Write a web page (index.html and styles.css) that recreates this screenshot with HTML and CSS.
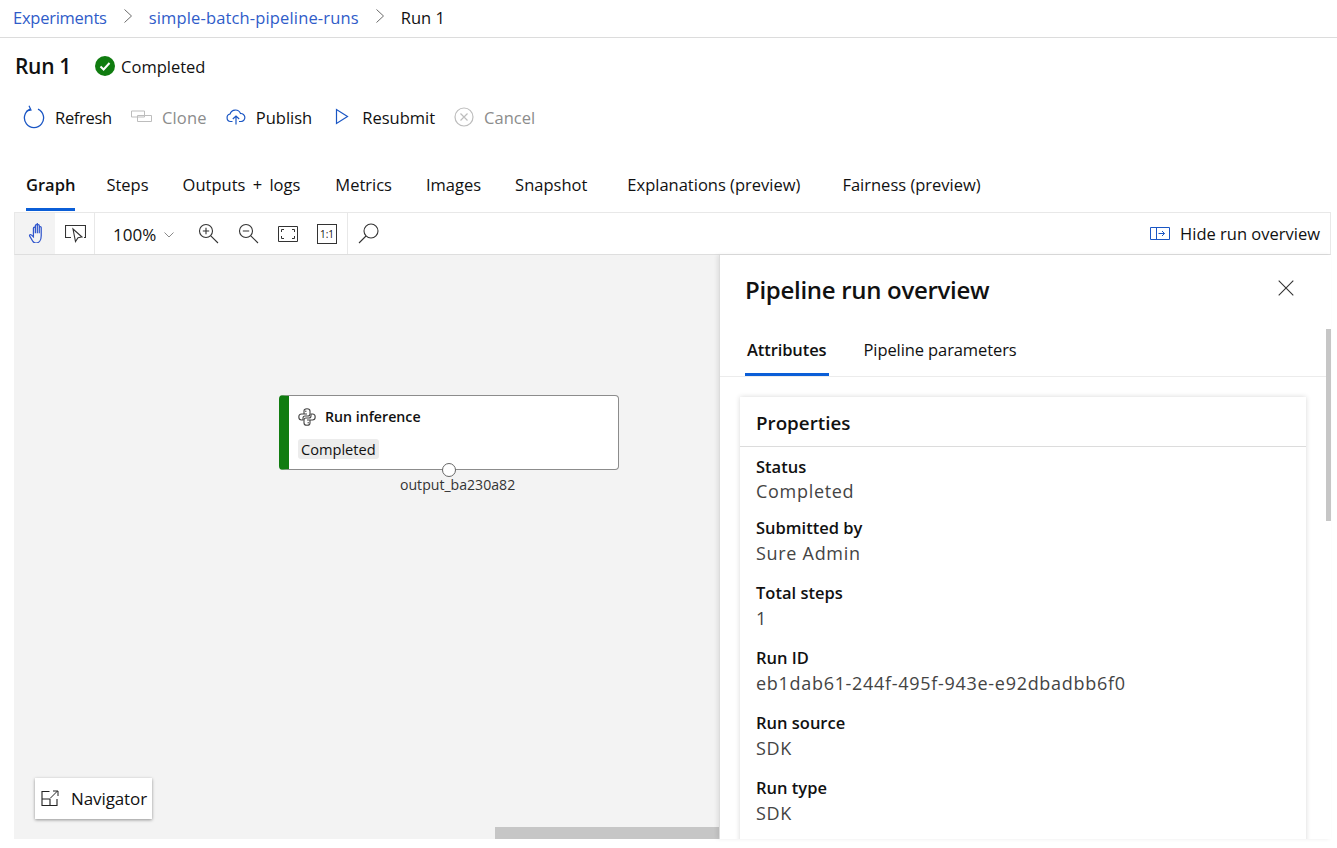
FILE: index.html
```html
<!DOCTYPE html>
<html lang="en">
<head>
  <meta charset="UTF-8" />
  <title>Run 1</title>
  <link rel="stylesheet" href="styles.css">
</head>
<body>
  <nav class="breadcrumb">
    <a class="crumb-first" href="#">Experiments</a>
    <svg class="crumb-sep" width="10" height="16" viewBox="0 0 10 16"><path d="M1.500 1.500 8.500 8l-7 6.500" fill="none" stroke="#6b6b6b" stroke-width="1"/></svg>
    <a class="crumb-second" href="#">simple-batch-pipeline-runs</a>
    <svg class="crumb-sep" width="10" height="16" viewBox="0 0 10 16"><path d="M1.500 1.500 8.500 8l-7 6.500" fill="none" stroke="#6b6b6b" stroke-width="1"/></svg>
    <span class="crumb-current">Run 1</span>
  </nav>

  <header class="run-header">
    <h1>Run 1</h1>
    <svg class="status-icon" width="20" height="20" viewBox="0 0 20 20"><circle cx="10" cy="10" r="10" fill="#107c10"/><path d="M5.500 10.500 8.600 13.500 14.500 7" fill="none" stroke="#fff" stroke-width="2"/></svg>
    <span class="status-text">Completed</span>
  </header>

  <div class="commands">
    <button class="cmd cmd-refresh">
      <svg width="22" height="24" viewBox="0 0 22 24"><path d="M7 4.200A9.600 9.600 0 1 0 15 4.200" fill="none" stroke="#1a56c4" stroke-width="1.300"/><path d="M6 .8 8 5 3.600 6" fill="none" stroke="#1a56c4" stroke-width="1.200"/></svg>
      Refresh
    </button>
    <button class="cmd cmd-clone is-disabled">
      <svg width="21" height="14" viewBox="0 0 21 14"><path d="M.5 1h13v6H.5zM6.500 5.500h14v6h-14z" fill="none" stroke="#bdbdbd" stroke-width="1"/></svg>
      Clone
    </button>
    <button class="cmd">
      <svg width="20" height="16" viewBox="0 0 20 16"><path d="M6.500 12.500H4.500a3.800 3.800 0 0 1-.4-7.500A5.500 5.500 0 0 1 14.500 4.500a4 4 0 0 1 .7 8h-2.200" fill="none" stroke="#1a56c4" stroke-width="1.200"/><path d="M10 15.500V7M6.800 10 10 7l3.200 3" fill="none" stroke="#1a56c4" stroke-width="1.200"/></svg>
      Publish
    </button>
    <button class="cmd cmd-resubmit">
      <svg width="14" height="18" viewBox="0 0 14 18"><path d="M1.500 1.500v14l11-7z" fill="none" stroke="#1a56c4" stroke-width="1.200"/></svg>
      Resubmit
    </button>
    <button class="cmd is-disabled">
      <svg width="20" height="20" viewBox="0 0 20 20"><circle cx="10" cy="10" r="9" fill="none" stroke="#bdbdbd" stroke-width="1.200"/><path d="M6.500 6.500l7 7M13.500 6.500l-7 7" fill="none" stroke="#bdbdbd" stroke-width="1.200"/></svg>
      Cancel
    </button>
  </div>

  <div class="tabs">
    <a class="tab is-active" href="#">Graph</a>
    <a class="tab" href="#">Steps</a>
    <a class="tab tab-spaced" href="#">Outputs + logs</a>
    <a class="tab" href="#">Metrics</a>
    <a class="tab" href="#">Images</a>
    <a class="tab" href="#">Snapshot</a>
    <a class="tab tab-wide" href="#">Explanations (preview)</a>
    <a class="tab tab-fair" href="#">Fairness (preview)</a>
  </div>

  <section class="graph-box">
    <div class="toolbar">
      <div class="tool-group">
        <button class="tool is-on">
          <svg class="hand-icon" width="17" height="20" viewBox="0 0 15 19.500"><path d="M4 18 .9 12.800c-.6-1.200.8-2 1.600-1.200L4.500 13.500V5c0-1.300 1.900-1.300 1.900 0v5-7.500c0-1.300 1.900-1.300 1.900 0V10-1 2.500c0-1.300 1.900-1.300 1.900 0V10 4.500c0-1.300 1.900-1.300 1.900 0v8c0 4-2 7-5 7H7c-1.300 0-2.200-.3-3-1.500z" fill="none" stroke="#2f55cc" stroke-width="1.200"/></svg>
        </button>
        <button class="tool tool-select">
          <svg width="21" height="18" viewBox="0 0 21 18"><path d="M6 12.500H.5V.5h20v12h-1.500" fill="none" stroke="#333" stroke-width="1.100"/><path d="M8 4l9 8-4 .8-2.500 3.700z" fill="none" stroke="#333" stroke-width="1.100"/></svg>
        </button>
      </div>
      <div class="tool-group tool-group-zoom">
        <button class="zoom-select">100%
          <svg width="10" height="6" viewBox="0 0 10 6"><path d="M.5.5 5 5 9.500.5" fill="none" stroke="#8a8a8a"/></svg>
        </button>
        <button class="tool-plain">
          <svg width="21" height="21" viewBox="0 0 21 21"><circle cx="8" cy="8" r="6.500" fill="none" stroke="#333" stroke-width="1.100"/><path d="M12.800 12.800 20 20M4.800 8h6.400M8 4.800v6.400" fill="none" stroke="#333" stroke-width="1.100"/></svg>
        </button>
        <button class="tool-plain">
          <svg width="21" height="21" viewBox="0 0 21 21"><circle cx="8" cy="8" r="6.500" fill="none" stroke="#333" stroke-width="1.100"/><path d="M12.800 12.800 20 20M4.800 8h6.400" fill="none" stroke="#333" stroke-width="1.100"/></svg>
        </button>
        <button class="tool-plain">
          <svg width="20" height="16" viewBox="0 0 20 16"><path d="M.5.500h19v15H.5z" fill="none" stroke="#333"/><path d="M3.500 6V3.500H6M14 3.500h2.500V6M16.500 10v2.500H14M6 12.500H3.500V10" fill="none" stroke="#333"/></svg>
        </button>
        <button class="tool-plain ratio-btn">1:1</button>
      </div>
      <button class="tool-plain tool-search">
        <svg width="21" height="21" viewBox="0 0 21 21"><circle cx="13" cy="8" r="7" fill="none" stroke="#333" stroke-width="1.100"/><path d="M8 13 1 20" fill="none" stroke="#333" stroke-width="1.100"/></svg>
      </button>
      <button class="hide-overview">
        <svg width="20" height="13" viewBox="0 0 20 13"><path d="M.5.500h19v12H.5zM6.500.500v12" fill="none" stroke="#1a56c4"/><path d="M8.500 6.500h6M12 4l2.500 2.500L12 9" fill="none" stroke="#1a56c4"/></svg>
        Hide run overview
      </button>
    </div>

    <div class="workspace">
      <div class="canvas">
        <div class="node">
          <div class="node-title">
            <svg width="18" height="18" viewBox="0 0 18 18">
              <g fill="none" stroke="#444" stroke-width="1.100">
                <path d="M6 6V3c0-1.500 1.500-2.300 3-2.300s3 .8 3 2.300v3c0 1.200-.9 2-2 2H7c-1.200 0-2 .8-2 2v2H3.500C1.800 12 .8 10.800.8 9s1-3 2.700-3H9"/>
                <path transform="rotate(180 9 9)" d="M6 6V3c0-1.500 1.500-2.300 3-2.300s3 .8 3 2.300v3c0 1.200-.9 2-2 2H7c-1.200 0-2 .8-2 2v2H3.500C1.800 12 .8 10.800.8 9s1-3 2.700-3H9"/>
              </g>
              <circle cx="7.800" cy="3.200" r=".7" fill="#444"/><circle cx="10.200" cy="14.800" r=".7" fill="#444"/>
            </svg>
            <span>Run inference</span>
          </div>
          <span class="node-badge">Completed</span>
          <span class="node-port"></span>
          <span class="node-output">output_ba230a82</span>
        </div>
        <button class="navigator">
          <svg width="18" height="17" viewBox="0 0 18 17"><path d="M8.500 1.500H1v14h15V9M1 9h8v6.500" fill="none" stroke="#222" stroke-width="1.100"/><path d="M9.500 8 16.500 1M12 1h5v5" fill="none" stroke="#222" stroke-width="1"/></svg>
          Navigator
        </button>
        <div class="h-thumb"></div>
      </div>

      <aside class="panel">
        <div class="panel-head">
          <h2>Pipeline run overview</h2>
          <svg class="panel-close" width="16" height="16" viewBox="0 0 16 16"><path d="M.7.700l14.600 14.600M15.300.700.700 15.300" fill="none" stroke="#333" stroke-width="1.100"/></svg>
        </div>
        <div class="panel-tabs">
          <a class="panel-tab is-active" href="#">Attributes</a>
          <a class="panel-tab" href="#">Pipeline parameters</a>
        </div>
        <div class="panel-body">
          <div class="card">
            <h3>Properties</h3>
            <dl class="props">
              <dt>Status</dt><dd>Completed</dd>
              <dt>Submitted by</dt><dd>Sure Admin</dd>
              <dt>Total steps</dt><dd>1</dd>
              <dt>Run ID</dt><dd>eb1dab61-244f-495f-943e-e92dbadbb6f0</dd>
              <dt>Run source</dt><dd>SDK</dd>
              <dt>Run type</dt><dd>SDK</dd>
            </dl>
          </div>
        </div>
        <div class="v-thumb"></div>
      </aside>
    </div>
  </section>
</body>
</html>
```

FILE: styles.css
```css
* {
  margin: 0; padding: 0; box-sizing: border-box;
  font-family: 'Open Sans', 'Noto Sans', sans-serif;
}

html, body {
  height: 848px;
  overflow: hidden;
}

body {
  background: #fff;
  color: #111;
  font-size: 16.5px;
}

a {
  text-decoration: none;
  color: inherit;
}

button {
  background: none;
  border: none;
  color: inherit;
  font-size: inherit;
  letter-spacing: inherit;
}

.breadcrumb {
  height: 38px;
  padding: 0 13px 2px;
  display: flex;
  align-items: center;
  border-bottom: 1px solid #dcdcdc;
}

.breadcrumb a {
  color: #2f5cc9;
}

.crumb-first {
  letter-spacing: -0.25px;
}

.crumb-second {
  letter-spacing: 0.15px;
}

.crumb-sep {
  margin: -4px 16px 0 16px;
}

.run-header {
  height: 56px;
  padding: 0 15px;
  display: flex;
  align-items: center;
}

.run-header h1 {
  font-size: 21px;
  font-weight: 600;
  letter-spacing: -0.3px;
  margin-right: 24px;
}

.status-icon {
  margin-right: 6px;
}

.commands {
  height: 48px;
  padding: 0 23px 2px;
  display: flex;
  align-items: center;
  gap: 19px;
}

.cmd {
  display: flex;
  align-items: center;
  gap: 10px;
}

.cmd-refresh {
  letter-spacing: -0.3px;
}

.cmd-clone {
  letter-spacing: 0.2px;
}

.cmd-resubmit {
  margin-left: 4px;
  gap: 13px;
}

.is-disabled {
  color: #8c8c8c;
}

.tabs {
  margin-top: 25px;
  margin-bottom: 1px;
  height: 44px;
  padding: 0 26px;
  display: flex;
  gap: 34px;
}

.tab {
  position: relative;
  padding-top: 6px;
}

.tab.is-active {
  font-weight: 600;
  margin-right: -3px;
}

.tab-spaced {
  word-spacing: 3px;
  margin-right: 1px;
}

.tab-wide {
  margin-left: 6px;
}

.tab-fair {
  margin-left: 8px;
}

.tab.is-active::after,
.panel-tab.is-active::after {
  content: "";
  position: absolute;
  left: 0;
  right: 0;
  bottom: 0;
  height: 3px;
  background: #0b5ed7;
}

.graph-box {
  margin: 0 6px 0 14px;
}

.toolbar {
  height: 43px;
  display: flex;
  align-items: center;
  border: 1px solid #e8e8e8;
  border-bottom-color: #dedede;
}

.tool-group {
  height: 100%;
  display: flex;
  align-items: center;
  border-right: 1px solid #e8e8e8;
}

.tool {
  width: 40px;
  height: 100%;
  display: flex;
  align-items: center;
  justify-content: center;
}

.hand-icon {
  margin: 0 0 2px 3px;
}

.tool-select {
  width: 39px;
  padding: 1px 0 0 2px;
}

.tool.is-on {
  background: #f3f3f3;
}

.tool-group-zoom {
  padding: 0 10px 0 18px;
  gap: 19px;
}

.zoom-select {
  width: 66px;
  display: flex;
  align-items: center;
  justify-content: space-between;
  padding-right: 5px;
  font-size: 17px;
  margin-top: 2px;
}

.tool-plain {
  display: flex;
  align-items: center;
  justify-content: center;
}

.ratio-btn {
  width: 20px;
  height: 20px;
  border: 1px solid #333;
  font-size: 10px;
}

.tool-search {
  margin-left: 10px;
}

.hide-overview {
  margin-left: auto;
  margin-right: 10px;
  display: flex;
  align-items: center;
  gap: 10px;
}

.workspace {
  height: 584px;
  display: flex;
}

.canvas {
  flex: 1;
  position: relative;
  background: #f3f3f3;
  overflow: hidden;
}

.node {
  position: absolute;
  left: 265px;
  top: 140px;
  width: 340px;
  height: 75px;
  background: #fff;
  border: 1px solid #8c8c8c;
  border-left: 10px solid #107c10;
  border-radius: 4px;
  padding: 11px 0 0 9px;
}

.node-title {
  display: flex;
  align-items: center;
  gap: 9px;
  font-size: 14.2px;
  font-weight: 600;
}

.node-badge {
  display: inline-block;
  margin-top: 13px;
  padding: 0 3px;
  background: #ececec;
  border-radius: 3px;
  font-size: 14.6px;
  line-height: 20px;
}

.node-port {
  position: absolute;
  left: 153px;
  bottom: -8px;
  width: 14px;
  height: 14px;
  background: #fff;
  border: 1px solid #666;
  border-radius: 50%;
}

.node-output {
  position: absolute;
  left: 111px;
  bottom: -25px;
  font-size: 14.1px;
  color: #333;
  white-space: nowrap;
}

.navigator {
  position: absolute;
  left: 21px;
  bottom: 20px;
  width: 117px;
  height: 41px;
  background: #fff;
  box-shadow: 0 1px 3px rgba(0, 0, 0, 0.4);
  display: flex;
  align-items: center;
  padding-left: 6px;
  gap: 12px;
  font-size: 17px;
  letter-spacing: -0.1px;
}

.h-thumb {
  position: absolute;
  right: 0;
  bottom: 0;
  width: 224px;
  height: 12px;
  background: #c6c6c6;
}

.panel {
  width: 612px;
  position: relative;
  background: #fff;
  border-left: 1px solid #dcdcdc;
  box-shadow: -2px 0 4px rgba(0, 0, 0, 0.08);
  overflow: hidden;
}

.panel-head {
  height: 71px;
  padding: 0 37px 0 25px;
  display: flex;
  align-items: center;
  justify-content: space-between;
}

.panel-head h2 {
  font-size: 24px;
  font-weight: 600;
  letter-spacing: -0.3px;
  margin-bottom: 2px;
}

.panel-close {
  margin-bottom: 5px;
}

.panel-tabs {
  height: 51px;
  padding: 0 25px;
  display: flex;
  gap: 33px;
  border-bottom: 1px solid #ececec;
  letter-spacing: -0.1px;
}

.panel-tab {
  position: relative;
  padding: 12px 2px 0;
}

.panel-tab.is-active {
  font-weight: 600;
}

.panel-body {
  padding: 20px 25px 0 20px;
}

.card {
  background: #fff;
  box-shadow: 0 0 5px rgba(0, 0, 0, 0.16);
  padding-bottom: 20px;
}

.card h3 {
  height: 50px;
  padding: 13px 16px 0;
  font-size: 18.800px;
  font-weight: 600;
  border-bottom: 1px solid #dcdcdc;
}

.props {
  padding: 8px 16px 0;
}

.props dt {
  font-weight: 600;
  line-height: 24px;
}

.props dd {
  color: #444;
  font-size: 18px;
  letter-spacing: 0.7px;
  line-height: 26px;
  margin-bottom: 15px;
}

.props dd:first-of-type {
  margin-top: -1px;
  margin-bottom: 12px;
}

.v-thumb {
  position: absolute;
  right: 0;
  top: 74px;
  width: 5px;
  height: 192px;
  background: #c6c6c6;
}
```
